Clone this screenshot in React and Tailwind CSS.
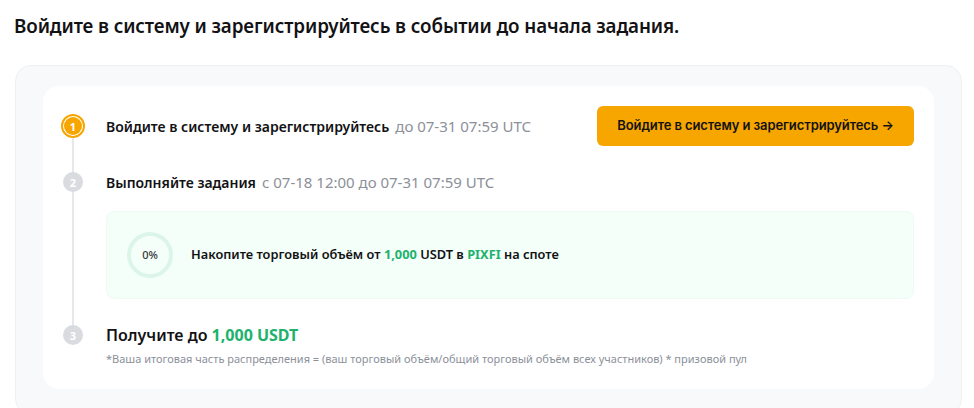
import React from "react";

function Step({ n, active }) {
  return active ? (
    <div className="w-6 h-6 rounded-full border-2 border-[#f7a600] bg-white flex items-center justify-center">
      <div className="w-[18px] h-[18px] rounded-full bg-[#f7a600] text-white text-[11px] font-bold flex items-center justify-center leading-none">
        {n}
      </div>
    </div>
  ) : (
    <div className="w-5 h-5 rounded-full bg-[#d8dbe0] text-white text-[11px] font-bold flex items-center justify-center leading-none">
      {n}
    </div>
  );
}

export default function App() {
  return (
    <div className="w-[974px] h-[408px] bg-white overflow-hidden font-['Noto_Sans',sans-serif] text-[#121214]">
      <h1 className="pl-[14px] pt-[12px] text-[18.8px] font-semibold leading-[28px] tracking-[-0.1px]">
        Войдите в систему и зарегистрируйтесь в событии до начала задания.
      </h1>
      <div className="mt-[25px] ml-[15px] w-[947px] h-[350px] rounded-[16px] border border-[#eef0f3] bg-[#f8f9fb] px-[27px] pt-[20px]">
        <div className="relative bg-white rounded-[16px] h-[303px] pl-[18px] pr-[20px] pt-[20px]">
          <div className="absolute left-[29px] top-[52px] w-[2px] h-[190px] bg-[#e6e8eb]" />
          {/* Step 1 */}
          <div className="flex items-center h-[40px]">
            <div className="w-6 flex justify-center relative">
              <Step n={1} active />
            </div>
            <div className="ml-[21px] flex items-baseline gap-[6px] flex-1">
              <span className="text-[14px] font-semibold">Войдите в систему и зарегистрируйтесь</span>
              <span className="text-[15px] text-[#8c9099]">до 07-31 07:59 UTC</span>
            </div>
            <button className="w-[317px] h-[40px] rounded-[6px] bg-[#f7a600] text-[13px] font-semibold text-[#121214] font-['Inter',sans-serif] tracking-[-0.1px]">
              Войдите в систему и зарегистрируйтесь →
            </button>
          </div>
          {/* Step 2 */}
          <div className="flex items-center mt-[25px] h-[22px]">
            <div className="w-6 flex justify-center relative">
              <Step n={2} />
            </div>
            <div className="ml-[21px] flex items-baseline gap-[6px]">
              <span className="text-[14px] font-semibold">Выполняйте задания</span>
              <span className="text-[15px] text-[#8c9099]">с 07-18 12:00 до 07-31 07:59 UTC</span>
            </div>
          </div>
          <div className="ml-[45px] mt-[18px] h-[88px] rounded-[8px] border border-[#eefaf4] bg-[#f5fffa] flex items-center pl-[20px]">
            <div className="w-[46px] h-[46px] rounded-full border-[4px] border-[#dcf5e9] flex items-center justify-center text-[11px] font-medium text-[#333]">
              0%
            </div>
            <div className="ml-[18px] text-[12.8px] font-semibold">
              Накопите торговый объём от <span className="text-[#20b26c] font-bold">1,000</span> USDT в{" "}
              <span className="text-[#20b26c] font-bold">PIXFI</span> на споте
            </div>
          </div>
          {/* Step 3 */}
          <div className="flex items-center mt-[25px] h-[22px]">
            <div className="w-6 flex justify-center relative">
              <Step n={3} />
            </div>
            <div className="ml-[21px] text-[16px] font-semibold">
              Получите до <span className="text-[#20b26c] font-bold">1,000 USDT</span>
            </div>
          </div>
          <div className="ml-[45px] mt-[5px] text-[11px] text-[#8c9099]">
            *Ваша итоговая часть распределения = (ваш торговый объём/общий торговый объём всех участников) * призовой пул
          </div>
        </div>
      </div>
    </div>
  );
}
